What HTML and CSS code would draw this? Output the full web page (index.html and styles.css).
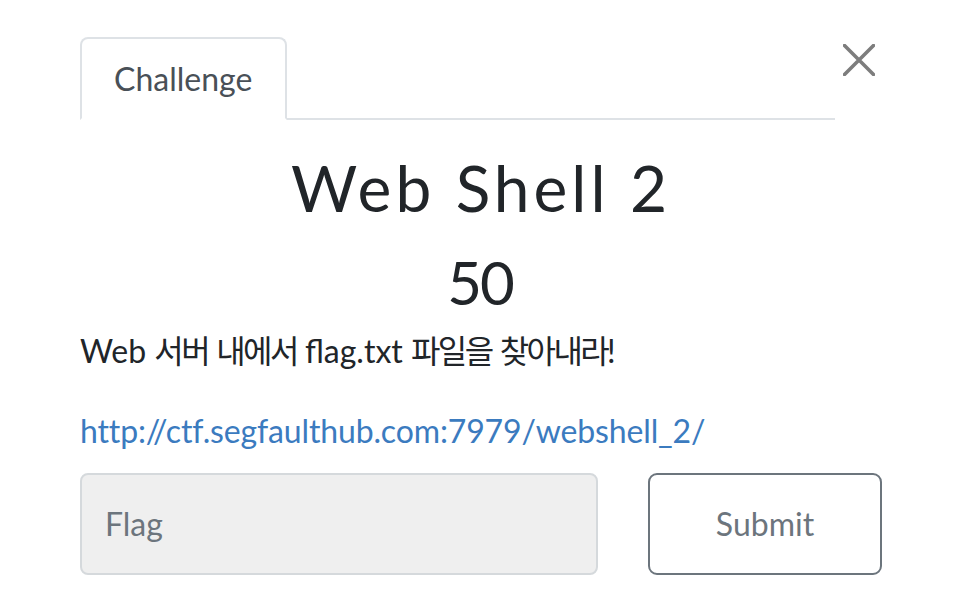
FILE: index.html
```html
<!DOCTYPE html>
<html lang="ko">
<head>
<meta charset="utf-8">
<title>Web Shell 2</title>
<link rel="stylesheet" href="styles.css">
</head>
<body>
<div class="modal">
  <div class="header">
    <ul class="nav">
      <li class="tab">Challenge</li>
    </ul>
    <button class="close" aria-label="Close">
      <svg width="32" height="32" viewBox="0 0 32 32"><path d="M1.5 1.5 L30.5 30.5 M30.5 1.5 L1.5 30.5" stroke="#7d7d7d" stroke-width="3.6" stroke-linecap="round" fill="none"/></svg>
    </button>
  </div>
  <h2 class="name">Web Shell 2</h2>
  <h3 class="value">50</h3>
  <p class="desc">Web <span class="ko">서버</span> <span class="ko">내에서</span> flag.txt <span class="ko">파일을</span> <span class="ko">찾아내라</span>!</p>
  <p class="link-row"><a class="link" href="#">http://ctf.segfaulthub.com:7979/webshell_2/</a></p>
  <div class="form">
    <input class="flag" type="text" placeholder="Flag">
    <button class="submit">Submit</button>
  </div>
</div>
</body>
</html>
```

FILE: styles.css
```css
html, body {
  margin: 0;
  padding: 0;
  background: #fff;
}
body {
  font-family: Lato, "Noto Sans CJK KR", sans-serif;
  color: #212529;
}
.modal {
  width: 802px;
  margin-left: 80px;
  padding-top: 37px;
}
.header {
  display: flex;
  align-items: flex-start;
}
.nav {
  flex: 1;
  display: flex;
  list-style: none;
  margin: 0;
  padding: 0;
  border-bottom: 2px solid #dee2e6;
}
.tab {
  font-size: 32px;
  line-height: 48px;
  color: #495057;
  padding: 16px 33px 15px 32px;
  border: 2px solid #dee2e6;
  border-bottom-color: #fff;
  border-radius: 8px 8px 0 0;
  margin-bottom: -2px;
  background: #fff;
}
.close {
  flex: 0 0 47px;
  border: 0;
  background: none;
  padding: 7px 0 0 8px;
  margin: 0;
  text-align: left;
  line-height: 0;
}
.name {
  margin: 30px 0 16px;
  font-size: 64px;
  font-weight: 400;
  line-height: 1.2;
  text-align: center;
  letter-spacing: 4px;
}
.value {
  margin: 0 0 6px;
  font-size: 60px;
  font-weight: 400;
  line-height: 78px;
  text-align: center;
  letter-spacing: -2px;
  text-indent: -2px;
}
.desc {
  margin: 0 0 32px;
  font-size: 32px;
  line-height: 48px;
}
.ko {
  letter-spacing: -2.6px;
}
.link-row {
  margin: 0 0 18px;
  font-size: 32px;
  line-height: 48px;
}
.link {
  color: #3b7bbf;
  text-decoration: none;
  letter-spacing: -0.14px;
}
.form {
  display: flex;
  justify-content: space-between;
}
.flag {
  box-sizing: border-box;
  width: 518px;
  height: 102px;
  padding: 0 23px;
  font-family: Lato, sans-serif;
  font-size: 32px;
  color: #495057;
  background: #efefef;
  border: 2px solid #d5d9dc;
  border-radius: 8px;
  outline: none;
}
.flag::placeholder {
  color: #6c757d;
}
.submit {
  box-sizing: border-box;
  width: 234px;
  height: 102px;
  font-family: Lato, sans-serif;
  font-size: 32px;
  color: #6c757d;
  background: #fff;
  border: 2px solid #6c757d;
  border-radius: 9px;
}
```
